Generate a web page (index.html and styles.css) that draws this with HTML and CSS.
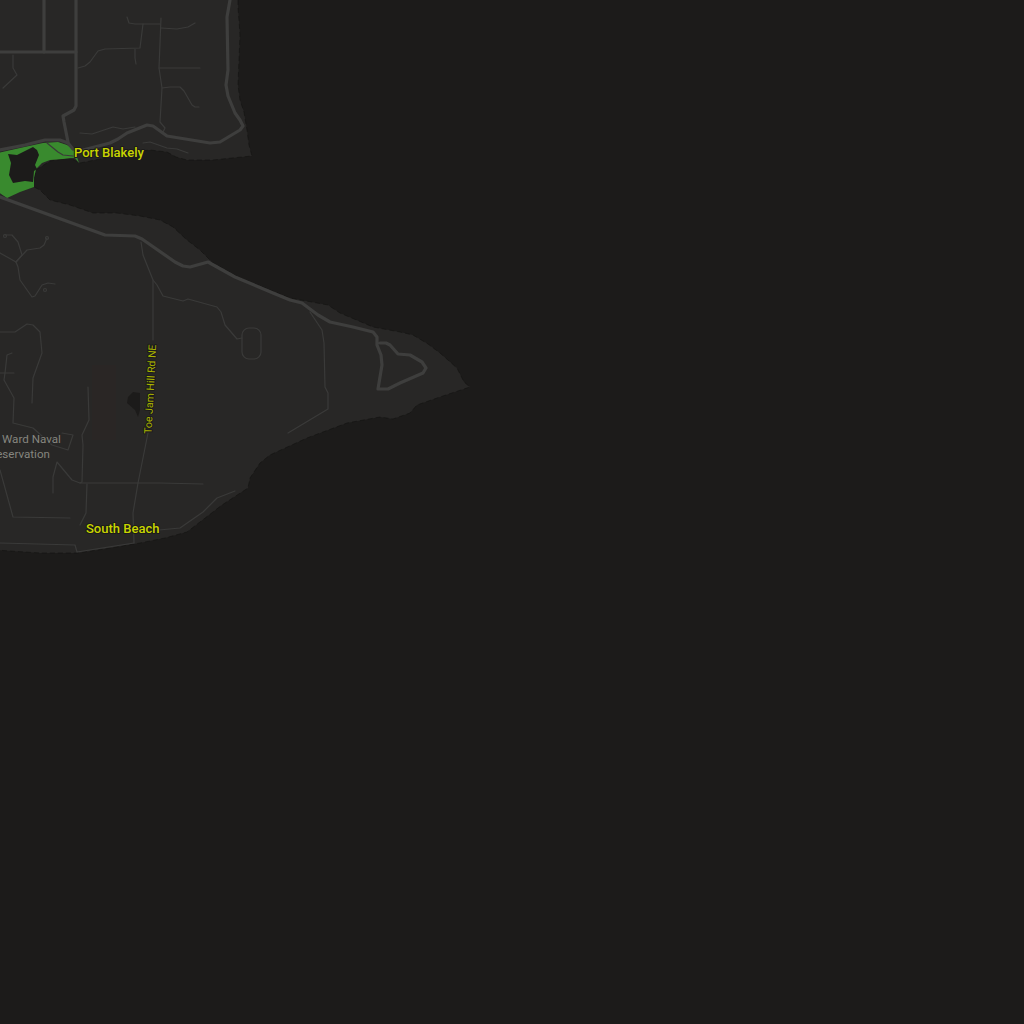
FILE: index.html
```html
<!DOCTYPE html>
<html lang="en">
<head>
<meta charset="utf-8">
<title>Map</title>
<link rel="stylesheet" href="styles.css">
</head>
<body>
<svg class="map" viewBox="0 0 1024 1024" width="1024" height="1024" role="img" aria-label="Dark map of the Port Blakely and South Beach area">
  <g class="land">
    <polygon points="-5,-5 238,-5 238,8 239,20 240,35 239,60 238,85 240,100 244,112 247,130 249,145 252,156 232,158 213,160 187,160 176,157 167,152 150,150 130,152 110,157 95,160 80,163 70,158 50,161 36,170 33,185 -5,205"/>
    <polygon points="-5,194 34,187 40,190 50,200 70,205 93,213 117,213 140,216 160,220 173,227 187,240 200,250 213,263 240,278 290,298 328,305 340,313 373,327 400,332 413,335 428,344 440,353 457,368 464,382 470,387 440,397 417,405 410,413 393,419 380,417 347,423 307,438 270,455 260,463 250,478 248,488 222,505 200,522 187,532 165,538 140,543 105,549 77,553 40,553 -5,550"/>
  </g>
  <polygon class="tint" points="92,365 116,365 116,440 92,440"/>
  <polygon class="park" points="-2,153 20,148 43,143 58,142 67,145 73,149 76,154 79,163 75,158 72,158 63,159 50,160 42,163 36,169 34,178 34,187 20,192 7,198 -2,192"/>
  <polygon class="water" points="8,154 17,155 33,147 37,150 39,155 35,165 37,169 34,171 33,182 25,181 13,183 9,175 11,163"/>
  <polygon class="water" points="133,392 140,393 140,410 138,417 135,410 127,403 128,397"/>
  <g class="minor">
    <polyline points="127,17 129,23 135,24 160,24"/>
    <polyline points="161,18 159,68 162,88 160,122 165,128 163,132"/>
    <polyline points="161,28 177,29 188,27 195,23"/>
    <polyline points="143,24 140,48 105,49 98,51 90,62 85,66 78,68"/>
    <polyline points="135,49 135,58 136,64"/>
    <polyline points="159,68 200,68"/>
    <polyline points="162,88 170,87 180,87 184,91 192,105 195,107 199,107"/>
    <polyline points="80,133 92,134 113,127 123,129 135,127"/>
    <polyline points="143,143 150,142 167,148 177,149 188,153"/>
    <polyline points="13,55 13,68 17,75 3,88"/>
    <polyline points="47,143 58,152 63,155 73,156"/>
    <polyline points="141,242 143,255 153,280 153,340"/>
    <polyline points="148,433 138,483 133,513 134,543"/>
    <polyline points="153,280 157,285 163,296 183,301 188,299 217,307 221,312 225,325 237,339 242,338"/>
    <rect x="242" y="328" width="19" height="31" rx="7"/>
    <polyline points="310,312 322,330 324,343 325,387 328,393 328,409 288,433"/>
    <polyline points="5,235 12,235 18,242 22,255 16,262 0,253"/>
    <polyline points="16,262 27,250 40,248 44,245 47,238"/>
    <polyline points="16,262 18,267 20,280 32,297 35,296 42,285 48,283 55,284"/>
    <circle cx="5" cy="236" r="1.5"/>
    <circle cx="47" cy="238" r="1.5"/>
    <circle cx="45" cy="290" r="1.5"/>
    <polyline points="0,332 15,332 27,324 33,325 40,332 42,353 33,378 32,403"/>
    <polyline points="12,353 7,355 5,373 4,380 14,398 13,423 33,428 52,445 68,450 73,435 62,433"/>
    <polyline points="0,373 14,373"/>
    <polyline points="88,387 89,420 82,435 83,445 82,482 80,483"/>
    <polyline points="53,493 53,477 57,462 72,480 80,483 160,483 203,484"/>
    <polyline points="87,484 86,513 80,525"/>
    <polyline points="0,470 13,517 70,518"/>
    <polyline points="0,543 75,545 77,552 134,543"/>
    <polyline points="159,530 180,528 203,512 217,498 235,491"/>
  </g>
  <g class="major">
    <polyline points="44,0 44,52"/>
    <polyline points="0,52 76,52"/>
    <polyline points="76,0 76,106 74,110 63,116 64,122 68,142"/>
    <polyline points="0,150 25,145 45,140 60,140 68,143 73,149"/>
    <polyline points="83,150 110,143 118,139 127,133 147,125 153,126 160,131 167,136 210,143 220,142 240,130 243,126 240,120 235,113 228,96 226,85 228,70 227,17 230,0"/>
    <polyline points="0,197 105,235 135,236 142,239 175,262 183,266 190,267 208,262 235,277 273,293 290,300 302,303 318,315 330,322 353,327 373,332 377,337 377,345 381,355 382,365 378,389 388,389 400,383 423,373 426,368 422,362 410,355 398,354 390,345 386,343 380,343"/>
  </g>
  <text class="label place" x="74" y="157">Port Blakely</text>
  <text class="label place" x="86" y="533">South Beach</text>
  <text class="label road" transform="translate(151.500 434) rotate(-87)">Toe Jam Hill Rd NE</text>
  <text class="label park-name" x="2" y="443">Ward Naval</text>
  <text class="label park-name" x="-11" y="458">Reservation</text>
</svg>
</body>
</html>
```
FILE: styles.css
```css
html, body {
  margin: 0;
  padding: 0;
  background: #1c1b1a;
}
.map {
  display: block;
}
.land polygon {
  fill: #282726;
  stroke: #121211;
  stroke-width: 0.6;
  stroke-dasharray: 5 3;
}
.tint {
  fill: #2a2625;
}
.park {
  fill: #398a2e;
}
.water {
  fill: #1c1b1a;
}
.minor > * {
  fill: none;
  stroke: #3a3a39;
  stroke-width: 1.2;
  stroke-linejoin: round;
  stroke-linecap: round;
}
.major polyline {
  fill: none;
  stroke: #3e3e3d;
  stroke-width: 3.2;
  stroke-linejoin: round;
  stroke-linecap: round;
}
.label {
  font-family: Roboto, "Liberation Sans", sans-serif;
  font-weight: 500;
  paint-order: stroke;
  stroke: #1c1b1a;
  stroke-width: 2px;
  stroke-linejoin: round;
}
.place {
  fill: #c9d500;
  font-size: 13px;
}
.road {
  fill: #a9b300;
  font-size: 10.5px;
  font-weight: 400;
}
.park-name {
  fill: #85857f;
  font-size: 11.6px;
  font-weight: 400;
  stroke: #282726;
}
```
